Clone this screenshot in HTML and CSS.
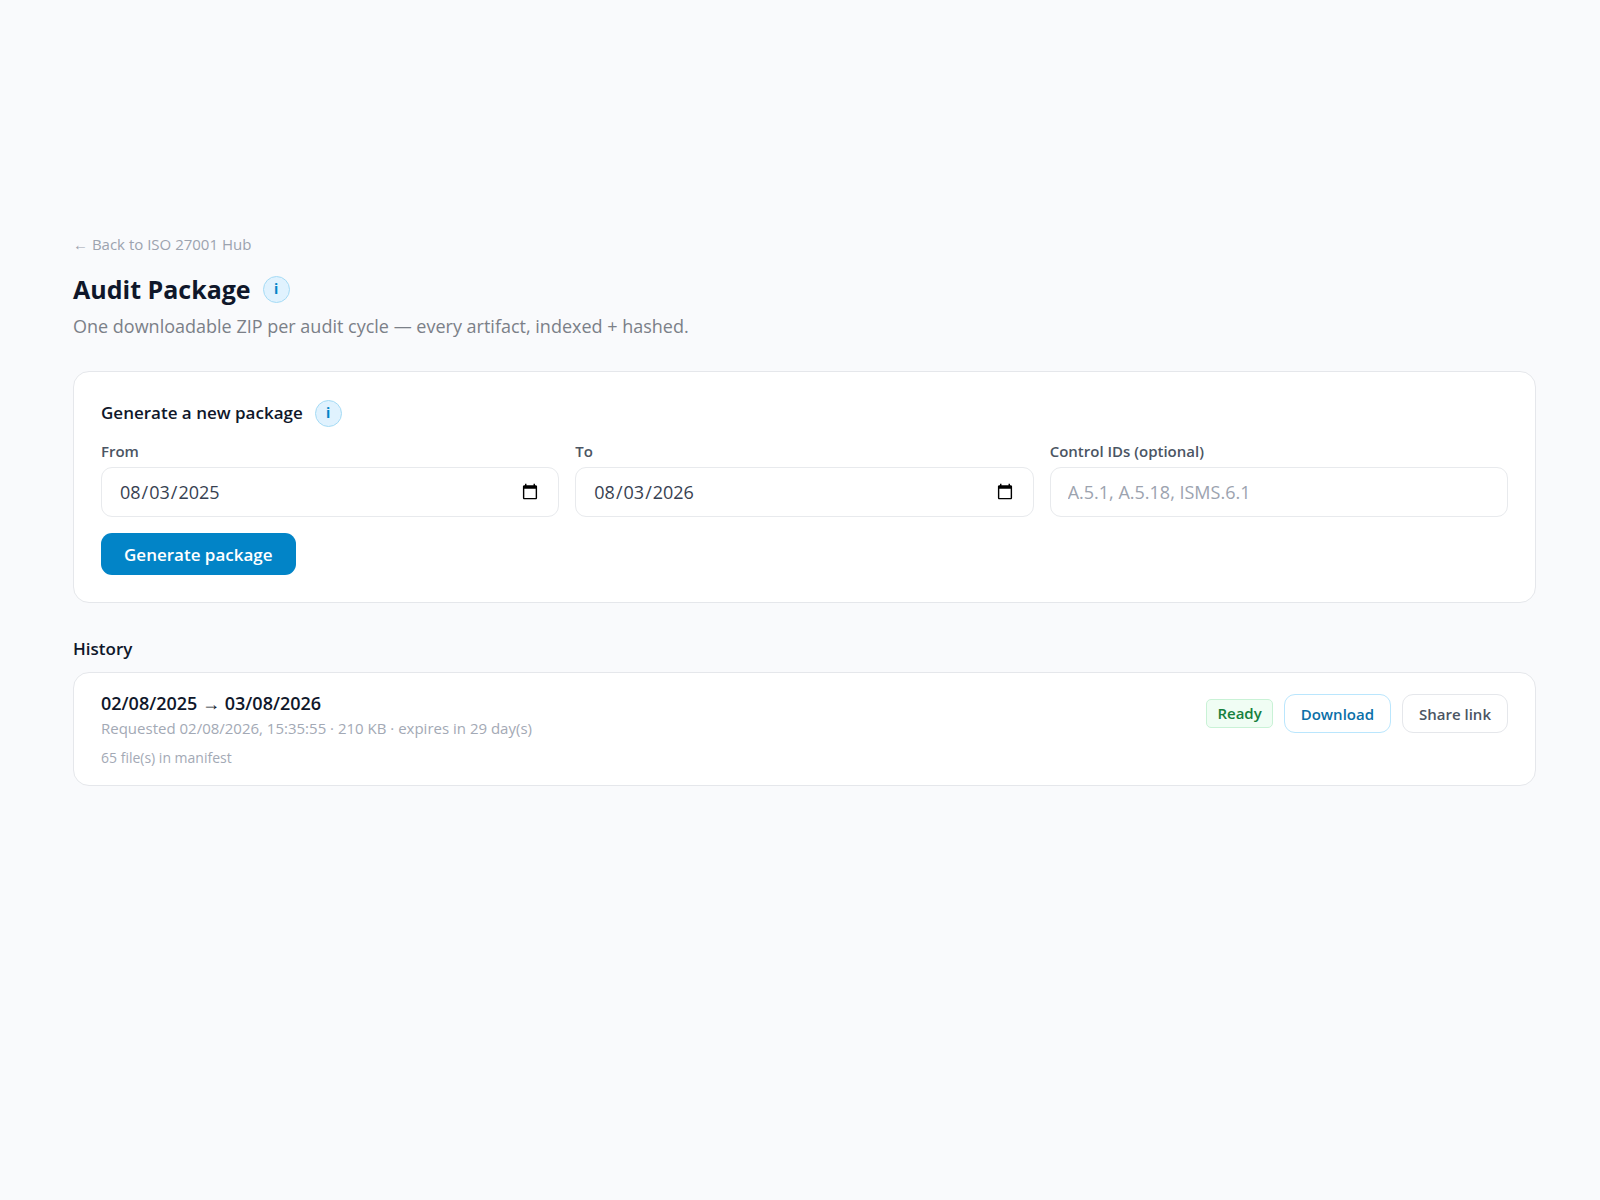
FILE: index.html
```html
<!DOCTYPE html>
<html lang="en-US">
<head>
<meta charset="utf-8">
<meta name="viewport" content="width=device-width, initial-scale=1">
<title>Audit Package</title>
<link rel="stylesheet" href="styles.css">
</head>
<body>
<main class="page">
  <header class="page-header">
    <a class="back-link" href="#">← Back to ISO 27001 Hub</a>
    <div class="heading-row">
      <h1 class="page-title">Audit Package</h1>
      <button class="info" type="button" aria-label="About audit packages">i</button>
    </div>
    <p class="subtitle">One downloadable ZIP per audit cycle — every artifact, indexed + hashed.</p>
  </header>

  <form class="card generate">
    <div class="heading-row">
      <h2 class="section-title">Generate a new package</h2>
      <button class="info" type="button" aria-label="About generating a package">i</button>
    </div>
    <div class="fields">
      <div class="field">
        <label class="field-label" for="from">From</label>
        <input class="field-input" id="from" type="date" value="2025-08-03">
      </div>
      <div class="field">
        <label class="field-label" for="to">To</label>
        <input class="field-input" id="to" type="date" value="2026-08-03">
      </div>
      <div class="field">
        <label class="field-label" for="controls">Control IDs (optional)</label>
        <input class="field-input" id="controls" type="text" placeholder="A.5.1, A.5.18, ISMS.6.1">
      </div>
    </div>
    <button class="btn-primary" type="submit">Generate package</button>
  </form>

  <section class="history">
    <h2 class="section-title">History</h2>
    <article class="card package">
      <div class="package-info">
        <h3 class="package-range">02/08/2025 → 03/08/2026</h3>
        <p class="package-meta">Requested 02/08/2026, 15:35:55 · 210 KB · expires in 29 day(s)</p>
        <p class="package-files">65 file(s) in manifest</p>
      </div>
      <div class="package-actions">
        <span class="status">Ready</span>
        <button class="btn btn-download" type="button">Download</button>
        <button class="btn" type="button">Share link</button>
      </div>
    </article>
  </section>
</main>
</body>
</html>
```
FILE: styles.css
```css
*, *::before, *::after { box-sizing: border-box; }

body {
  margin: 0;
  background: #f9fafc;
  color: #0f172a;
  font-family: "Open Sans", "Noto Sans", sans-serif;
}

h1, h2, h3, p { margin: 0; }
button, input { font-family: inherit; }
button { cursor: pointer; }

.page { padding: 232px 64px 64px 73px; }

.page-header {
  display: flex;
  flex-direction: column;
  align-items: flex-start;
  margin-bottom: 32px;
}

.back-link {
  margin-bottom: 15px;
  color: #9ca3af;
  font-size: 15px;
  line-height: 24px;
  text-decoration: none;
}

.heading-row {
  display: flex;
  align-items: center;
  gap: 12px;
}

.page-title {
  font-size: 25px;
  line-height: 36px;
  font-weight: 700;
}

.info {
  width: 27px;
  height: 27px;
  padding: 0;
  border: 1px solid #a5dbf5;
  border-radius: 50%;
  background: #e0f2fe;
  color: #0284c7;
  font-size: 14px;
  line-height: 24px;
  font-weight: 700;
}

.subtitle {
  margin-top: 6px;
  color: #7b8088;
  font-size: 18px;
  line-height: 26px;
}

.card {
  border: 1px solid #e5e7eb;
  border-radius: 16px;
  background: #fff;
}

.generate { padding: 27px; }

.section-title {
  font-size: 17px;
  line-height: 28px;
  font-weight: 600;
}

.generate .heading-row { line-height: 28px; }

.fields {
  display: grid;
  grid-template-columns: repeat(3, 1fr);
  gap: 16px;
  margin: 13px 0 16px;
}

.field {
  display: flex;
  flex-direction: column;
  gap: 5px;
}

.field-label {
  color: #4b5563;
  font-size: 15px;
  line-height: 22px;
  font-weight: 600;
}

.field-input {
  width: 100%;
  height: 50px;
  padding: 0 17px;
  border: 1px solid #e8eaed;
  border-radius: 11px;
  background: #fff;
  color: #374151;
  font-size: 18px;
}

.field-input::placeholder { color: #9ca3af; }

.btn-primary {
  display: block;
  height: 42px;
  padding: 0 23px;
  border: 0;
  border-radius: 11px;
  background: #0284c7;
  color: #fff;
  font-size: 17px;
  font-weight: 600;
}

.history {
  display: flex;
  flex-direction: column;
  gap: 9px;
  margin-top: 32px;
}

.package {
  display: flex;
  justify-content: space-between;
  align-items: flex-start;
  gap: 16px;
  padding: 17px 27px;
}

.package-range {
  font-size: 18px;
  line-height: 26px;
  font-weight: 600;
}

.package-meta {
  color: #a3a9b5;
  font-size: 15px;
  line-height: 24px;
}

.package-files {
  margin-top: 8px;
  color: #a3a9b5;
  font-size: 14px;
  line-height: 20px;
}

.package-actions {
  display: flex;
  align-items: center;
  gap: 11px;
  margin-top: 4px;
}

.status {
  padding: 3px 10px;
  border: 1px solid #c9f2d6;
  border-radius: 5px;
  background: #f0fdf4;
  color: #15803d;
  font-size: 15px;
  line-height: 21px;
  font-weight: 600;
}

.btn {
  height: 39px;
  padding: 0 16px;
  border: 1px solid #e5e7eb;
  border-radius: 11px;
  background: #fff;
  color: #4b5563;
  font-size: 15px;
  font-weight: 600;
}

.btn-download {
  border-color: #bae6fd;
  color: #0b6fa8;
}
```
